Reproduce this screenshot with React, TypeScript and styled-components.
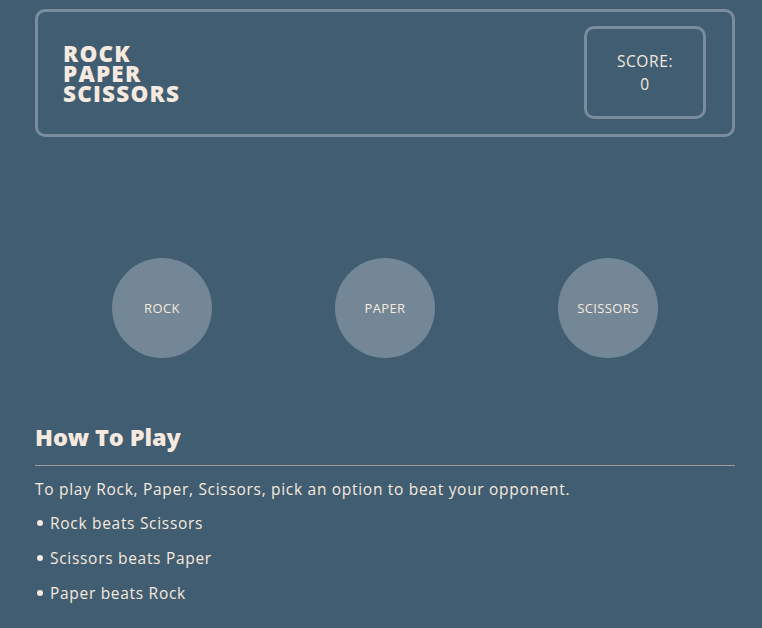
import React from "react";
import styled, { createGlobalStyle } from "styled-components";

const Global = createGlobalStyle`
  html, body { margin: 0; padding: 0; background: #415d71; }
  body { font-family: "Open Sans", "Liberation Sans", sans-serif; color: #f6e9df; }
`;

const Page = styled.div`
  width: 700px;
  margin-left: 35px;
  padding-top: 9px;
`;

const Header = styled.header`
  height: 128px;
  box-sizing: border-box;
  border: 3px solid #7a8d9c;
  border-radius: 10px;
  display: flex;
  align-items: center;
  justify-content: space-between;
  padding: 0 26px 0 25px;
`;

const Title = styled.h1`
  margin: 2px 0 0;
  font-size: 22.5px;
  font-weight: 800;
  line-height: 20px;
  letter-spacing: 1.2px;
  text-transform: uppercase;
`;

const ScoreBox = styled.div`
  width: 122px;
  height: 93px;
  box-sizing: border-box;
  border: 3px solid #7a8d9c;
  border-radius: 10px;
  display: flex;
  flex-direction: column;
  align-items: center;
  justify-content: center;
  font-size: 15.5px;
  letter-spacing: 0.6px;
  line-height: 23px;
  margin-top: -1px;
`;

const Choices = styled.div`
  display: flex;
  justify-content: center;
  gap: 123px;
  margin-top: 121px;
`;

const Choice = styled.button`
  width: 100px;
  height: 100px;
  border-radius: 50%;
  border: none;
  background: #738796;
  color: #f6e9df;
  font-family: inherit;
  font-size: 13px;
  letter-spacing: 0.4px;
  padding: 0;
`;

const Rules = styled.section`
  margin-top: 64px;
`;

const Heading = styled.h2`
  margin: 0;
  font-size: 23.5px;
  font-weight: 800;
  line-height: 30px;
  letter-spacing: -0.1px;
`;

const Rule = styled.hr`
  margin: 13px 0 11px;
  border: none;
  border-top: 1px solid #a09a98;
`;

const Text = styled.p`
  margin: 0;
  font-size: 15.5px;
  line-height: 24px;
  letter-spacing: 0.7px;
`;

const List = styled.ul`
  margin: -1px 0 0;
  padding: 0;
  list-style: none;
`;

const Item = styled.li`
  font-size: 15.5px;
  line-height: 24px;
  letter-spacing: 0.7px;
  margin-top: 11px;
  display: flex;
  align-items: center;
  &::before {
    content: "";
    width: 6px;
    height: 6px;
    border-radius: 50%;
    background: #f6e9df;
    margin: 0 7px 0 2px;
  }
`;

export default function App() {
  return (
    <>
      <Global />
      <Page>
        <Header>
          <Title>
            Rock
            <br />
            Paper
            <br />
            Scissors
          </Title>
          <ScoreBox>
            <span>SCORE:</span>
            <span>0</span>
          </ScoreBox>
        </Header>
        <Choices>
          <Choice>ROCK</Choice>
          <Choice>PAPER</Choice>
          <Choice>SCISSORS</Choice>
        </Choices>
        <Rules>
          <Heading>How To Play</Heading>
          <Rule />
          <Text>To play Rock, Paper, Scissors, pick an option to beat your opponent.</Text>
          <List>
            <Item>Rock beats Scissors</Item>
            <Item>Scissors beats Paper</Item>
            <Item>Paper beats Rock</Item>
          </List>
        </Rules>
      </Page>
    </>
  );
}
